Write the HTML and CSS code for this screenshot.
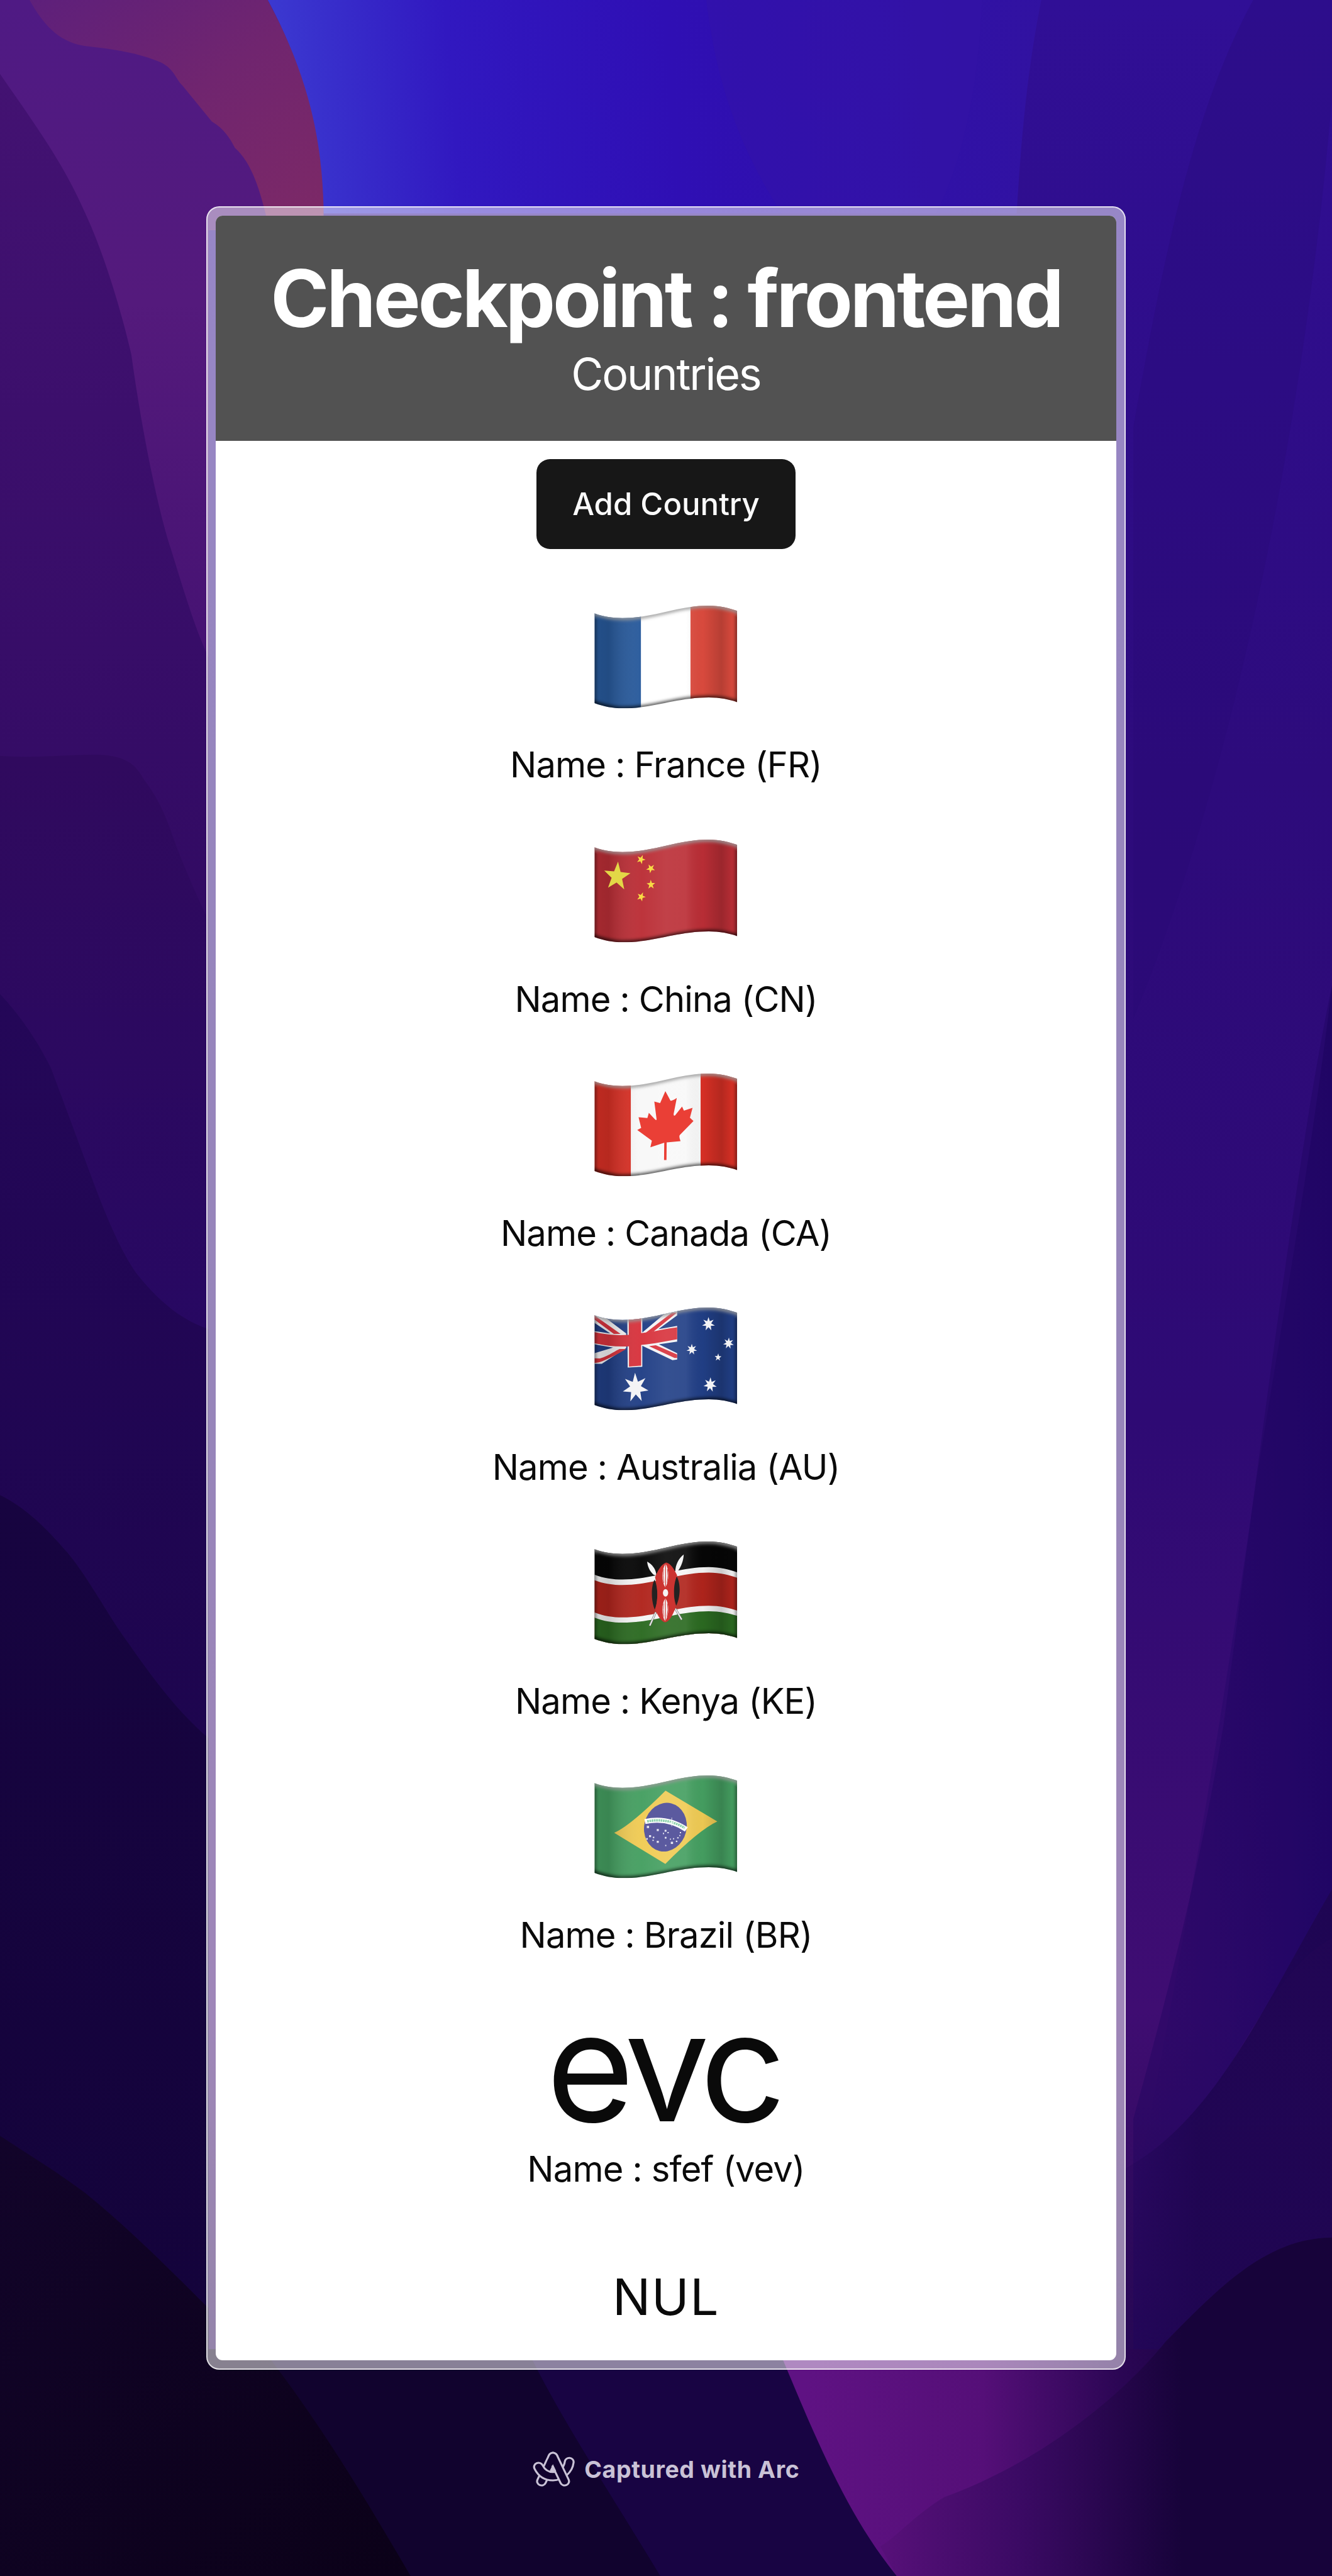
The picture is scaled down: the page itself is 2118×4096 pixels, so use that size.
FILE: index.html
```html
<!DOCTYPE html>
<html lang="en">
<head>
<meta charset="utf-8">
<title>Checkpoint : frontend</title>
<link rel="stylesheet" href="styles.css">
</head>
<body>
<svg class="wallpaper" viewBox="0 0 811 1568" preserveAspectRatio="none" aria-hidden="true">
  <defs>
    <linearGradient id="right" x1="0" y1="0" x2="0" y2="1"><stop offset="0" stop-color="#300f96"/><stop offset=".3" stop-color="#2d0b7c"/><stop offset=".55" stop-color="#2e0a74"/><stop offset=".78" stop-color="#3f0d72"/><stop offset=".88" stop-color="#2f0a5c"/><stop offset="1" stop-color="#180443"/></linearGradient>
    <linearGradient id="blue" gradientUnits="userSpaceOnUse" x1="170" y1="40" x2="640" y2="0"><stop offset="0" stop-color="#3b38d0"/><stop offset=".22" stop-color="#3118c0"/><stop offset=".5" stop-color="#2f0fb4"/><stop offset="1" stop-color="#3112a0"/></linearGradient>
    <linearGradient id="red" x1="0" y1="0" x2="1" y2="1"><stop offset="0" stop-color="#5c1f7c"/><stop offset=".5" stop-color="#70256f"/><stop offset="1" stop-color="#7d2966"/></linearGradient>
    <linearGradient id="plum" x1="0" y1="0" x2="0" y2="1"><stop offset="0" stop-color="#4f1a84"/><stop offset=".45" stop-color="#541a7c"/><stop offset="1" stop-color="#451272"/></linearGradient>
    <linearGradient id="l1" x1="0" y1="0" x2="0" y2="1"><stop offset="0" stop-color="#431272"/><stop offset="1" stop-color="#300a62"/></linearGradient>
    <linearGradient id="l2" x1="0" y1="0" x2="0" y2="1"><stop offset="0" stop-color="#300a5e"/><stop offset="1" stop-color="#270862"/></linearGradient>
    <linearGradient id="l3" x1="0" y1="0" x2="0" y2="1"><stop offset="0" stop-color="#240758"/><stop offset="1" stop-color="#1d054e"/></linearGradient>
    <linearGradient id="l4" x1="0" y1="0" x2="0" y2="1"><stop offset="0" stop-color="#170440"/><stop offset="1" stop-color="#13033a"/></linearGradient>
    <linearGradient id="l5" x1="0" y1="0" x2="1" y2="1"><stop offset="0" stop-color="#12042a"/><stop offset="1" stop-color="#0b0118"/></linearGradient>
    <linearGradient id="mag" gradientUnits="userSpaceOnUse" x1="490" y1="0" x2="730" y2="0"><stop offset="0" stop-color="#5f1283"/><stop offset=".45" stop-color="#550f78"/><stop offset=".8" stop-color="#2b0654"/><stop offset="1" stop-color="#1c0446"/></linearGradient>
    <linearGradient id="rb" gradientUnits="userSpaceOnUse" x1="540" y1="0" x2="720" y2="0"><stop offset="0" stop-color="#561078"/><stop offset=".45" stop-color="#3b0a64"/><stop offset="1" stop-color="#17033a"/></linearGradient>
    <linearGradient id="dr" gradientUnits="userSpaceOnUse" x1="690" y1="0" x2="811" y2="0"><stop offset="0" stop-color="#270767" stop-opacity="0"/><stop offset="1" stop-color="#22066a"/></linearGradient>
    <linearGradient id="dk" gradientUnits="userSpaceOnUse" x1="690" y1="0" x2="730" y2="0"><stop offset="0" stop-color="#1d0550" stop-opacity=".2"/><stop offset="1" stop-color="#1e0550" stop-opacity=".85"/></linearGradient>
  </defs>
  <rect width="811" height="1568" fill="url(#right)"/>
  <path d="M763 0C725 70 708 160 690 260V620C740 500 790 300 811 60V0Z" fill="#260973" opacity=".28"/>
  <path d="M811 300V1180C770 1200 740 1290 690 1340C720 1190 745 1040 765 900C785 780 800 690 811 600Z" fill="url(#dr)"/>
  <path d="M811 600C790 700 765 900 745 1050C730 1140 712 1210 690 1290V1568H811Z" fill="#1f0560" opacity=".4"/>
  <path d="M811 1150C770 1220 740 1290 685 1320V1568H811Z" fill="url(#dk)"/>
  <path d="M163 0H634C626 40 622 80 619 130H197C194 90 190 50 163 0Z" fill="url(#blue)"/>
  <path d="M430 0C436 50 450 90 476 130H570C590 90 596 40 598 0Z" fill="#3513a6" opacity=".45"/>
  <path d="M0 0H163C190 50 196 90 197 126V140H0Z" fill="url(#red)"/>
  <path d="M0 0H18C28 18 38 26 52 28C70 30 84 32 98 38C106 42 107 48 111 52L129 74C136 78 140 84 143 90C152 98 158 112 164 140H127V410H0Z" fill="url(#plum)"/>
  <path d="M0 45C20 74 38 98 52 130C64 156 74 190 80 216C86 260 96 310 104 334C112 360 120 386 127 400V600H0Z" fill="url(#l1)"/>
  <path d="M0 460C30 462 50 458 67 460C80 462 84 468 88 475C98 488 102 500 107 514C114 532 120 546 127 560V820H0Z" fill="url(#l2)"/>
  <path d="M0 605C12 618 22 632 31 650L57 720C66 744 74 762 83 775C98 794 112 804 127 809V1080H0Z" fill="url(#l3)"/>
  <path d="M0 910C16 918 28 930 41 945C55 962 66 984 78 1000C92 1020 108 1042 127 1058V1568H0Z" fill="url(#l4)"/>
  <path d="M120 1430H480L550 1568H120Z" fill="#180443"/>
  <path d="M120 1430H321C340 1470 370 1515 402 1568H120Z" fill="#11032e"/>
  <path d="M0 1300C18 1312 35 1322 52 1335C78 1356 104 1382 127 1405V1430H160C195 1475 222 1520 250 1568H0Z" fill="url(#l5)"/>
  <path d="M474 1430C495 1480 515 1530 546 1568H760V1430Z" fill="url(#mag)"/>
  <path d="M811 1362C770 1362 740 1395 710 1425C680 1462 630 1500 575 1520C558 1530 545 1545 536 1550L546 1568H811Z" fill="url(#rb)"/>
</svg>

<svg class="defs" width="0" height="0" aria-hidden="true">
  <defs>
    <path id="wave" d="M81 121C130 140 180 146 230 146C400 146 520 80 690 80C750 80 800 94 842 108V595C800 580 750 570 690 570C520 570 400 628 230 628C180 628 130 618 81 600Z"/>
    <clipPath id="cloth"><use href="#wave"/></clipPath>
    <filter id="soft" x="-10%" y="-20%" width="120%" height="140%"><feGaussianBlur stdDeviation="9"/></filter>
    <linearGradient id="folds" gradientUnits="userSpaceOnUse" x1="81" y1="0" x2="842" y2="0">
      <stop offset="0" stop-color="#000" stop-opacity=".12"/><stop offset=".1" stop-color="#000" stop-opacity=".16"/>
      <stop offset=".33" stop-color="#fff" stop-opacity=".03"/><stop offset=".5" stop-color="#fff" stop-opacity=".09"/><stop offset=".64" stop-color="#fff" stop-opacity=".08"/>
      <stop offset=".76" stop-color="#000" stop-opacity=".02"/><stop offset=".89" stop-color="#000" stop-opacity=".17"/><stop offset=".96" stop-color="#000" stop-opacity=".04"/><stop offset="1" stop-color="#000" stop-opacity=".04"/>
    </linearGradient>
    <g id="shade" fill="none">
      <use href="#wave" fill="url(#folds)"/>
      <g filter="url(#soft)">
        <path d="M81 112V610M842 100V610" stroke="#000" stroke-opacity=".5" stroke-width="16"/>
        <path d="M60 592C130 618 180 630 230 630C400 630 520 572 690 572C750 572 800 582 860 602" stroke="#000" stroke-opacity=".65" stroke-width="24"/>
        <path d="M60 112C130 140 180 146 230 146C400 146 520 80 690 80C750 80 800 94 860 114" stroke="#9a9a9a" stroke-opacity=".85" stroke-width="24"/>
      </g>
    </g>
    <path id="star5" d="M0 -1L.235 -.324L.951 -.309L.38 .124L.588 .809L0 .4L-.588 .809L-.38 .124L-.951 -.309L-.235 -.324Z"/>
    <path id="star7" d="M0 -1L.2 -.4L.78 -.62L.41 -.1L.975 .22L.35 .28L.434 .9L0 .45L-.434 .9L-.35 .28L-.975 .22L-.41 -.1L-.78 -.62L-.2 -.4Z"/>
  </defs>
</svg>

<main class="window">
  <div class="screen">
    <header class="header">
      <h1 class="title">Checkpoint : frontend</h1>
      <p class="subtitle">Countries</p>
    </header>
    <button class="add" type="button">Add Country</button>
    <ul class="countries">
      <li class="country">
        <div class="emoji"><svg class="flag" viewBox="80 80 764 549" role="img" aria-label="Flag of France">
          <g clip-path="url(#cloth)">
            <path d="M70 60H330V650H70Z" fill="#285a9c"/><path d="M329 60H594V650H329Z" fill="#fff"/><path d="M593 60H860V650H593Z" fill="#dc4b3e"/>
            <use href="#shade"/>
          </g></svg></div>
        <p class="name">Name : France (FR)</p>
      </li>
      <li class="country">
        <div class="emoji"><svg class="flag" viewBox="80 80 764 549" role="img" aria-label="Flag of China">
          <g clip-path="url(#cloth)">
            <path d="M70 60H860V650H70Z" fill="#bb2e36"/>
            <use href="#shade"/>
            <g transform="translate(0 13)" fill="#e3d747">
              <use href="#star5" transform="translate(201 264) rotate(4) skewY(2) scale(74 80)"/>
              <g fill="#f7da45">
                <use href="#star5" transform="translate(329 173) rotate(22) scale(24 26)"/>
                <use href="#star5" transform="translate(381 221) rotate(42) scale(24 26)"/>
                <use href="#star5" transform="translate(382 307) rotate(-2) scale(24 26)"/>
                <use href="#star5" transform="translate(330 372) rotate(22) scale(24 26)"/>
              </g>
            </g>
          </g></svg></div>
        <p class="name">Name : China (CN)</p>
      </li>
      <li class="country">
        <div class="emoji"><svg class="flag" viewBox="80 80 764 549" role="img" aria-label="Flag of Canada">
          <g clip-path="url(#cloth)">
            <path d="M70 60H276V650H70Z" fill="#d93025"/><path d="M275 60H648V650H275Z" fill="#f8f8f8"/><path d="M647 60H860V650H647Z" fill="#d93025"/>
            <use href="#shade"/>
            <path transform="translate(0 24)" fill="#ea3f36" d="M459 150L486 200Q494 204 520 186L503 272Q503 284 511 279L548 232L558 254L604 239L590 292L609 309L536 384Q530 391 540 417L466 423L465 517H452L453 425L379 449L387 414L309 357L330 346L316 289L363 293L371 266L405 302Q414 307 412 298L400 205L431 214Z"/>
          </g></svg></div>
        <p class="name">Name : Canada (CA)</p>
      </li>
      <li class="country">
        <div class="emoji"><svg class="flag" viewBox="80 80 764 549" role="img" aria-label="Flag of Australia">
          <g clip-path="url(#cloth)">
            <path d="M70 60H860V650H70Z" fill="#213f86"/>
            <g transform="translate(0 6)">
              <path fill="#f3f3f5" d="M80 100L125 118L250 212V290L120 374H80V318L180 288L80 270V200L165 212L80 155ZM522 90V116L422 190L522 172V256L425 270L522 318V352L497 355L330 275V212L458 105ZM256 120H336V390L258 394Z"/>
              <path fill="#d8333d" d="M80 205C150 220 200 224 264 220V125H330V211C400 204 460 187 522 180V243C460 254 400 266 330 274V384L265 389V281C200 284 140 278 80 264Z"/>
              <path fill="#d8333d" d="M80 114L92 124L220 215H184L80 138ZM494 102H520L395 203L353 210ZM80 345L110 346C160 330 200 300 214 295H250C200 325 150 350 105 367L80 370ZM372 280L408 275L522 325V343L508 343Z"/>
            </g>
            <use href="#shade"/>
            <g transform="translate(0 6)" fill="#f3f3f5">
              <use href="#star7" transform="translate(300 502) rotate(-2) scale(70 80)"/>
              <use href="#star7" transform="translate(689 162) scale(35 37)"/>
              <use href="#star7" transform="translate(600 298) scale(29 30)"/>
              <use href="#star7" transform="translate(796 265) rotate(4) scale(29 31)"/>
              <use href="#star7" transform="translate(698 486) rotate(3) scale(36 40)"/>
              <use href="#star5" transform="translate(740 340) rotate(3) scale(19 21)"/>
            </g>
          </g></svg></div>
        <p class="name">Name : Australia (AU)</p>
      </li>
      <li class="country">
        <div class="emoji"><svg class="flag" viewBox="80 80 764 549" role="img" aria-label="Flag of Kenya">
          <g clip-path="url(#cloth)">
            <path d="M70 60H860V650H70Z" fill="#060606"/>
            <g transform="translate(0 3)">
              <path fill="#f5f5f5" d="M80 254C130 274 180 280 230 280C400 280 520 214 690 214C750 214 800 228 843 242V700H80Z"/>
              <path fill="#b0241c" d="M80 283C130 303 180 309 230 309C400 309 520 243 690 243C750 243 800 257 843 271V700H80Z"/>
              <path fill="#f5f5f5" d="M80 455C130 475 180 482 230 482C400 482 520 420 690 420C750 420 800 432 843 446V700H80Z"/>
              <path fill="#2b6a21" d="M80 483C130 503 180 510 230 510C400 510 520 449 690 449C750 449 800 460 843 474V700H80Z"/>
            </g>
            <use href="#shade"/>
            <g transform="translate(0 3)">
              <path d="M408 455L376 526M512 435L546 494" stroke="#777" stroke-width="11"/>
              <path d="M408 455L376 526M512 435L546 494" stroke="#eee" stroke-width="6"/>
              <path fill="#f5f5f5" d="M362 184C390 200 410 225 411 258L398 256C375 235 364 210 362 184ZM557 147C532 165 512 200 512 240L524 238C545 210 555 180 557 147Z"/>
              <path fill="#222" d="M402 280C383 310 381 390 402 440C420 400 422 330 402 280ZM519 262C499 300 499 370 517 420C541 370 541 300 519 262Z"/>
              <path fill="#cc3431" d="M463 189C436 198 417 236 404 268C420 320 420 390 405 442C420 476 440 508 458 508C482 506 500 464 513 432C500 370 502 300 522 258C506 222 484 192 463 189Z"/>
              <g fill="#f5f5f5"><path d="M460 194C438 230 438 290 459 323C480 285 480 228 460 194ZM459 379C438 410 438 470 458 504C480 466 480 410 459 379Z"/><ellipse cx="460" cy="351" rx="14" ry="20"/></g>
              <path d="M460 194V323M459 379V504" stroke="#cc3431" stroke-width="4"/>
              <path d="M449 225Q444 260 451 298M470 225Q476 260 469 298M449 408Q444 440 450 478M470 408Q476 440 468 478" fill="none" stroke="#cc3431" stroke-width="3"/>
            </g>
          </g></svg></div>
        <p class="name">Name : Kenya (KE)</p>
      </li>
      <li class="country">
        <div class="emoji"><svg class="flag" viewBox="80 80 764 549" role="img" aria-label="Flag of Brazil">
          <g clip-path="url(#cloth)">
            <path d="M70 60H860V650H70Z" fill="#459f61"/>
            <path d="M460 161L736 326Q640 370 459 552L186 386Q270 350 460 161Z" fill="#f0cb54"/>
            <use href="#shade"/>
            <ellipse cx="459" cy="356" rx="113" ry="131" transform="rotate(14 459 356)" fill="#5b5a9f"/>
            <path d="M350 326Q470 300 571 368" fill="none" stroke="#fff" stroke-width="27"/>
            <path d="M362 325Q470 305 562 360" fill="none" stroke="#8fd3ae" stroke-width="13" stroke-dasharray="9 3"/>
            <path d="M493 305V352M482 331H504" stroke="#fff" stroke-width="3" opacity=".8"/>
            <g fill="#fff"><path d="M360 349h12v12h-12zM413 366h11v11h-11zM372 399h11v11h-11zM413 429h11v11h-11zM455 370h10v10h-10zM488 434h12v12h-12zM456 408h9v9h-9zM392 407h8v8h-8zM357 415h8v8h-8zM470 382h7v7h-7zM446 386h6v8h-6zM390 423h7v7h-7zM458 451h6v6h-6zM483 417h6v6h-6zM500 415h6v6h-6zM515 428h8v8h-8zM536 382h7v7h-7zM533 398h6v6h-6zM522 410h8v6h-8z" opacity=".85"/></g>
          </g></svg></div>
        <p class="name">Name : Brazil (BR)</p>
      </li>
      <li class="country">
        <div class="emoji"><span class="glyph">evc</span></div>
        <p class="name">Name : sfef (vev)</p>
      </li>
      <li class="country"><span class="null">NUL</span></li>
    </ul>
  </div>
</main>

<footer class="credit">
  <svg class="arc" viewBox="135 529 212 188" preserveAspectRatio="none" aria-hidden="true" fill="none" stroke-linecap="round" stroke-linejoin="round">
    <path d="M179 688L236 558" stroke="#c9c2d6" stroke-width="54"/><path d="M179 688L236 558" stroke="#12032f" stroke-width="34"/>
    <path d="M164 611C180 645 205 661 236 661C275 661 312 630 317 585" stroke="#c9c2d6" stroke-width="54"/><path d="M164 611C180 645 205 661 236 661C275 661 312 630 317 585" stroke="#12032f" stroke-width="34"/>
    <path d="M294 688L236 558" stroke="#c9c2d6" stroke-width="54"/><path d="M294 688L236 558L222 590" stroke="#12032f" stroke-width="34"/>
    <path d="M236 597L252 633Q236 640 220 631Z" fill="#c9c2d6"/>
  </svg>
  <span class="credit-text">Captured with Arc</span>
</footer>
</body>
</html>
```
FILE: styles.css
```css
html { font-size: 57.243px; }
* { box-sizing: border-box; margin: 0; padding: 0; }
body {
  position: relative;
  width: 2118px;
  height: 4096px;
  overflow: hidden;
  display: flex;
  flex-direction: column;
  align-items: center;
  padding-top: 5.734rem;
  background: #180443;
  font-family: Inter, "Liberation Sans", sans-serif;
  color: #0a0a0a;
}
.wallpaper { position: absolute; inset: 0; width: 100%; height: 100%; z-index: -1; }
.defs { position: absolute; }
.window {
  flex: none;
  width: 25.531rem;
  height: 60.094rem;
  padding: .23rem;
  border: .035rem solid rgba(255, 255, 255, .75);
  border-radius: .36rem;
  background: rgba(255, 255, 255, .5);
}
.screen {
  height: 100%;
  display: flex;
  flex-direction: column;
  align-items: center;
  overflow: hidden;
  border-radius: .19rem;
  background: #fff;
}
.header {
  flex: none;
  width: 100%;
  height: 6.25rem;
  display: flex;
  flex-direction: column;
  align-items: center;
  padding-top: 1.045rem;
  background: #525252;
  color: #fff;
}
.title { font-size: 2.2rem; line-height: 2.5rem; font-weight: 700; letter-spacing: -.032em; white-space: nowrap; }
.subtitle { margin-top: -.02rem; font-size: 1.22rem; line-height: 1.75rem; font-weight: 430; letter-spacing: -.03em; }
.add {
  flex: none;
  width: 7.203rem;
  height: 2.5rem;
  margin-top: .5rem;
  border: 0;
  border-radius: .375rem;
  background: #171717;
  color: #fafafa;
  font: 500 .858rem/1.25rem Inter, "Liberation Sans", sans-serif;
}
.countries { flex: none; width: 100%; margin-top: .25rem; list-style: none; }
.country { height: 6.5rem; display: flex; flex-direction: column; align-items: center; }
.emoji { height: 5rem; display: flex; align-items: flex-start; }
.flag { display: block; width: 3.979rem; height: 2.859rem; margin-top: 1.323rem; }
.name { padding-top: .02rem; font-size: .98rem; line-height: 1.48rem; font-weight: 430; letter-spacing: -.015em; white-space: nowrap; }
.glyph { margin: .648rem .18rem 0 0; font-size: 4.2rem; line-height: 4.5rem; font-weight: 430; letter-spacing: -.045em; }
.null { margin-top: 2.055rem; font-size: 1.4rem; line-height: 1.5rem; font-weight: 430; letter-spacing: .02em; }
.credit { flex: none; margin-top: 2.225rem; display: flex; align-items: center; gap: .26rem; color: #c9c2d6; }
.arc { display: block; width: 1.183rem; height: .98rem; }
.credit-text { padding-top: .05rem; font-size: .655rem; line-height: 1rem; font-weight: 650; letter-spacing: .016em; }
```
